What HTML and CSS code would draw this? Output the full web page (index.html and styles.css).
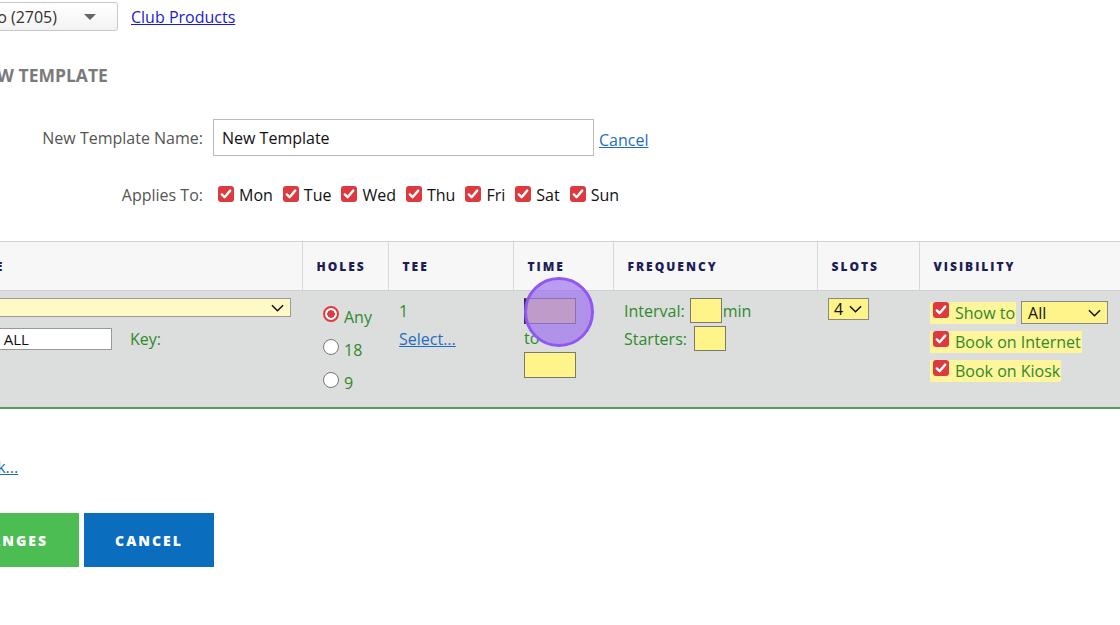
FILE: index.html
```html
<!DOCTYPE html>
<html lang="en">
<head>
    <meta charset="UTF-8" />
    <meta name="viewport" content="width=device-width, initial-scale=1.0"/>
    <title>New Template</title>
    <link rel="stylesheet" href="styles.css">
</head>
<body>
    <div class="page">
        <div class="topbar">
            <div class="club-select">
                <span>Pro (2705)</span>
                <span class="caret"></span>
            </div>
            <a href="#" class="club-link">Club Products</a>
        </div>

        <h2 class="title">New Template</h2>

        <div class="form-row">
            <label class="form-label">New Template Name:</label>
            <div class="name-input">New Template</div>
            <a href="#" class="link cancel-link">Cancel</a>
        </div>

        <div class="form-row days-row">
            <label class="form-label">Applies To:</label>
            <div class="days">
                <span class="day"><span class="cb"><svg viewBox="0 0 16 16"><path d="M3.8 8.4l2.8 2.8 5.6-6.6" /></svg></span>Mon</span>
                <span class="day"><span class="cb"><svg viewBox="0 0 16 16"><path d="M3.8 8.4l2.8 2.8 5.6-6.6" /></svg></span>Tue</span>
                <span class="day"><span class="cb"><svg viewBox="0 0 16 16"><path d="M3.8 8.4l2.8 2.8 5.6-6.6" /></svg></span>Wed</span>
                <span class="day"><span class="cb"><svg viewBox="0 0 16 16"><path d="M3.8 8.4l2.8 2.8 5.6-6.6" /></svg></span>Thu</span>
                <span class="day"><span class="cb"><svg viewBox="0 0 16 16"><path d="M3.8 8.4l2.8 2.8 5.6-6.6" /></svg></span>Fri</span>
                <span class="day"><span class="cb"><svg viewBox="0 0 16 16"><path d="M3.8 8.4l2.8 2.8 5.6-6.6" /></svg></span>Sat</span>
                <span class="day"><span class="cb"><svg viewBox="0 0 16 16"><path d="M3.8 8.4l2.8 2.8 5.6-6.6" /></svg></span>Sun</span>
            </div>
        </div>

        <table class="slots-table">
            <colgroup>
                <col style="width: 330px">
                <col style="width: 86px">
                <col style="width: 125px">
                <col style="width: 100px">
                <col style="width: 204px">
                <col style="width: 102px">
                <col>
            </colgroup>
            <thead>
                <tr>
                    <th>Type</th>
                    <th>Holes</th>
                    <th>Tee</th>
                    <th>Time</th>
                    <th>Frequency</th>
                    <th>Slots</th>
                    <th>Visibility</th>
                </tr>
            </thead>
            <tbody>
                <tr>
                    <td>
                        <div class="type-select"><span></span><svg class="chev" viewBox="0 0 14 8"><path d="M1 1l6 6 6-6" /></svg></div>
                        <div class="key-line">
                            <div class="all-input">- ALL</div>
                            <span>Key:</span>
                        </div>
                    </td>
                    <td>
                        <div class="holes">
                            <label class="radio-line"><span class="radio on"></span>Any</label>
                            <label class="radio-line"><span class="radio"></span>18</label>
                            <label class="radio-line"><span class="radio"></span>9</label>
                        </div>
                    </td>
                    <td>
                        <div class="tee">
                            <div>1</div>
                            <a href="#" class="link">Select...</a>
                        </div>
                    </td>
                    <td>
                        <div class="time">
                            <div class="yellow-input time-input focused"></div>
                            <div class="to">to</div>
                            <div class="yellow-input time-input"></div>
                            <div class="click-mark"></div>
                        </div>
                    </td>
                    <td>
                        <div class="freq">
                            <div class="freq-line">Interval: <span class="yellow-input small-input"></span>min</div>
                            <div class="freq-line">Starters: <span class="yellow-input small-input starters"></span></div>
                        </div>
                    </td>
                    <td>
                        <div class="slots-select">4<svg class="chev" viewBox="0 0 14 8"><path d="M1 1l6 6 6-6" /></svg></div>
                    </td>
                    <td>
                        <div class="visibility">
                            <div class="vis-line">
                                <span class="hl"><span class="cb"><svg viewBox="0 0 16 16"><path d="M3.8 8.4l2.8 2.8 5.6-6.6" /></svg></span>Show to</span>
                                <div class="show-select">All<svg class="chev" viewBox="0 0 14 8"><path d="M1 1l6 6 6-6" /></svg></div>
                            </div>
                            <div class="vis-line">
                                <span class="hl"><span class="cb"><svg viewBox="0 0 16 16"><path d="M3.8 8.4l2.8 2.8 5.6-6.6" /></svg></span>Book on Internet</span>
                            </div>
                            <div class="vis-line">
                                <span class="hl"><span class="cb"><svg viewBox="0 0 16 16"><path d="M3.8 8.4l2.8 2.8 5.6-6.6" /></svg></span>Book on Kiosk</span>
                            </div>
                        </div>
                    </td>
                </tr>
            </tbody>
        </table>

        <div class="more-row">
            <a href="#" class="link">Link...</a>
        </div>

        <div class="actions">
            <a href="#" class="btn btn-save">Save Changes</a>
            <a href="#" class="btn btn-cancel">Cancel</a>
        </div>
    </div>
</body>
</html>
```

FILE: styles.css
```css
body {
    margin: 0;
    background-color: #fff;
    font-family: "Open Sans", "Liberation Sans", sans-serif;
    font-size: 16px;
    color: #222;
    overflow: hidden;
}

.page {
    margin-left: -28px;
    width: 1200px;
}

.link {
    color: #1f6dc2;
    text-decoration: underline;
}

/* top bar */
.topbar {
    display: flex;
    align-items: center;
    margin-top: 2px;
}

.club-select {
    width: 146px;
    height: 29px;
    box-sizing: border-box;
    border: 1px solid #c9c9c9;
    border-radius: 3px;
    background: linear-gradient(#fff, #f3f3f3);
    display: flex;
    align-items: center;
    justify-content: space-between;
    padding: 0 21px 0 8px;
    color: #333;
}

.caret {
    width: 0;
    height: 0;
    border-left: 6px solid transparent;
    border-right: 6px solid transparent;
    border-top: 6px solid #666;
}

.club-link {
    margin-left: 13px;
    color: #1a1ad8;
    text-decoration: underline;
}

.title {
    margin: 32px 0 0 1px;
    font-size: 17.5px;
    line-height: 24px;
    font-weight: bold;
    color: #7a7a7a;
    text-transform: uppercase;
}

/* form rows */
.form-row {
    display: flex;
    align-items: center;
    gap: 10px;
    margin-top: 32px;
}

.form-label {
    width: 231px;
    text-align: right;
    color: #555;
    flex-shrink: 0;
}

.name-input {
    width: 381px;
    height: 37px;
    box-sizing: border-box;
    border: 1px solid #bbb;
    padding: 0 8px;
    display: flex;
    align-items: center;
    color: #111;
}

.cancel-link {
    margin-left: -5px;
    margin-top: 4px;
}

.days-row {
    margin-top: 28px;
}

.days {
    display: flex;
    gap: 10px;
    padding-left: 5px;
    color: #111;
}

.day {
    display: flex;
    align-items: center;
    gap: 5px;
}

.cb {
    width: 16px;
    height: 16px;
    border-radius: 3px;
    background-color: #dd3a40;
    display: inline-flex;
    flex-shrink: 0;
    margin-top: -3px;
}

.cb svg {
    width: 16px;
    height: 16px;
    fill: none;
    stroke: #fff;
    stroke-width: 2.4;
    stroke-linecap: round;
    stroke-linejoin: round;
}

/* table */
.slots-table {
    margin-top: 35px;
    width: 1188px;
    border-collapse: collapse;
    table-layout: fixed;
}

.slots-table th {
    height: 48px;
    background-color: #f7f7f7;
    border-top: 1px solid #d2d2d2;
    border-bottom: 1px solid #cfcfcf;
    border-left: 1px solid #d8d8d8;
    text-align: left;
    padding: 0 14px;
    font-size: 12px;
    font-weight: 800;
    letter-spacing: 2px;
    text-transform: uppercase;
    color: #1c1c56;
}

.slots-table th:first-child {
    border-left: none;
    text-indent: -19px;
    overflow: hidden;
}

.slots-table td {
    background-color: #dcdedd;
    vertical-align: top;
    padding: 7px 11px 0;
    height: 109px;
    border-bottom: 2px solid #5b9a58;
    color: #2f8a2a;
}

.slots-table td:first-child {
    padding-left: 14px;
}

.yellow-input {
    background-color: #fff48a;
    border: 1px solid #7a7a6a;
    box-sizing: border-box;
    display: inline-block;
}

.chev {
    width: 13px;
    height: 8px;
    fill: none;
    stroke: #111;
    stroke-width: 1.6;
}

.type-select {
    width: 305px;
    height: 19px;
    box-sizing: border-box;
    background-color: #fff9c6;
    border: 1px solid #9a9a9a;
    display: flex;
    align-items: center;
    justify-content: flex-end;
    padding-right: 6px;
}

.key-line {
    display: flex;
    align-items: center;
    gap: 18px;
    margin-top: 11px;
}

.all-input {
    width: 126px;
    height: 22px;
    box-sizing: border-box;
    background-color: #fff;
    border: 1px solid #999;
    padding-left: 8px;
    font-size: 15px;
    line-height: 20px;
    color: #111;
}

.holes {
    display: flex;
    flex-direction: column;
    padding-left: 10px;
    padding-top: 2px;
}

.radio-line {
    display: flex;
    align-items: center;
    gap: 5px;
    height: 33px;
}

.radio {
    width: 16px;
    height: 16px;
    box-sizing: border-box;
    border: 1px solid #777;
    border-radius: 50%;
    background-color: #fff;
    margin-top: -6px;
}

.radio.on {
    border: 2px solid #e0393e;
    background: radial-gradient(circle, #e0393e 0 3.5px, #fff 4px);
}

.tee {
    line-height: 28px;
    margin-top: -1px;
}

.tee div, .tee a {
    display: block;
}

.time {
    position: relative;
}

.time-input {
    display: block;
    width: 52px;
    height: 26px;
}

.time-input.focused {
    border-left: 3px solid #333;
}

.to {
    line-height: 28px;
}

.click-mark {
    position: absolute;
    left: 0;
    top: -21px;
    width: 64px;
    height: 64px;
    border-radius: 50%;
    border: 3px solid #8f58f4;
    background-color: rgba(150, 100, 240, 0.62);
}

.freq {
    display: flex;
    flex-direction: column;
    gap: 3px;
}

.freq-line {
    display: flex;
    align-items: center;
    gap: 4px;
    height: 25px;
}

.small-input {
    width: 32px;
    height: 25px;
    margin-left: 1px;
    margin-right: -3px;
}

.small-input.starters {
    margin-left: 3px;
}

.slots-select {
    width: 41px;
    height: 22px;
    box-sizing: border-box;
    background-color: #fff48a;
    border: 1px solid #8a8a7a;
    display: flex;
    align-items: center;
    gap: 6px;
    padding-left: 5px;
    color: #111;
}

.visibility {
    display: flex;
    flex-direction: column;
    gap: 7px;
    padding-top: 3px;
}

.vis-line {
    display: flex;
    align-items: center;
    gap: 5px;
}

.hl {
    background-color: #fff59a;
    height: 22px;
    display: inline-flex;
    align-items: center;
    gap: 6px;
    padding: 0 1px 0 3px;
    line-height: 22px;
}

.hl .cb {
    margin-top: -6px;
}

.show-select {
    width: 87px;
    height: 23px;
    box-sizing: border-box;
    background-color: #fff48a;
    border: 1px solid #888;
    display: flex;
    align-items: center;
    justify-content: space-between;
    padding: 0 6px 0 6px;
    color: #111;
}

/* bottom */
.more-row {
    margin-top: 46px;
    line-height: 24px;
    padding-left: 3px;
}

.actions {
    display: flex;
    gap: 5px;
    margin-top: 34px;
    margin-left: -86px;
}

.btn {
    height: 54px;
    padding: 0 31px;
    display: inline-flex;
    align-items: center;
    color: #fff;
    text-decoration: none;
    font-size: 14px;
    font-weight: 800;
    letter-spacing: 2px;
    text-transform: uppercase;
}

.btn-save {
    background-color: #4bbd52;
}

.btn-cancel {
    background-color: #0a6dbd;
}
```
